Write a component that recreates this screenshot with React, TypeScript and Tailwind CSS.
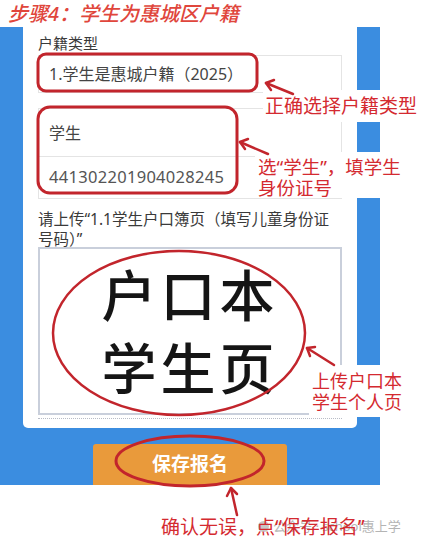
import React from "react";

const cjk = { fontFamily: '"Noto Sans", "Noto Sans CJK SC", sans-serif' };

function Note({ className, lines }: { className: string; lines: string[] }) {
  return (
    <div
      className={`absolute bg-white text-[#d42a30] leading-[21px] ${className}`}
      style={cjk}
    >
      {lines.map((l) => (
        <div key={l} className="whitespace-nowrap">
          {l}
        </div>
      ))}
    </div>
  );
}

function Marks() {
  const red = "#c2252c";
  return (
    <svg
      className="pointer-events-none absolute left-0 top-0"
      width="422"
      height="541"
      viewBox="0 0 422 541"
      fill="none"
    >
      {/* outlined fields */}
      <rect x="38" y="54" width="219" height="37" rx="8" stroke={red} strokeWidth="3" />
      <rect x="38" y="107" width="199" height="86" rx="12" stroke={red} strokeWidth="3" />
      <ellipse cx="179" cy="333" rx="126" ry="82" stroke={red} strokeWidth="2.5" />
      <ellipse cx="190" cy="461" rx="74" ry="25" stroke={red} strokeWidth="3" />
      {/* arrows */}
      <g stroke={red} strokeWidth="2.5" strokeLinecap="round" strokeLinejoin="round">
        <path d="M293 94 L266 83" />
        <path d="M274 80 L266 83 L271 90" />
        <path d="M268 154 L240 142" />
        <path d="M248 139 L240 142 L245 149" />
        <path d="M334 365 L307 348" />
        <path d="M315 347 L307 348 L310 356" />
        <path d="M237 515 L231 488" />
        <path d="M227 496 L231 488 L237 494" />
      </g>
    </svg>
  );
}

export default function App() {
  return (
    <div className="relative h-[541px] w-[422px] overflow-hidden bg-white" style={cjk}>
      <div className="h-[27px] pl-[8px] pt-[2px] text-[20px] font-medium italic leading-[24px] text-[#e0463c]">
        步骤4：学生为惠城区户籍
      </div>

      <div className="w-[380px] bg-[#3b8de0]">
        <div className="mx-[23px] h-[401px] rounded-b-[5px] bg-white px-[15px] pt-[6px] text-[#333]">
          <div className="text-[15px] leading-[21px] text-[#3a3a3a]">户籍类型</div>
          <div className="mt-[1px] flex h-[38px] w-[304px] items-center border border-[#e4e4e4] pl-[10px] text-[16px] text-[#444]">
            1.学生是惠城户籍（2025）
          </div>
          <div className="mt-[15px] w-[304px] border border-[#e4e4e4]">
            <div className="flex h-[48px] items-center border-b border-[#e4e4e4] pl-[10px] text-[16px] text-[#444]">
              学生
            </div>
            <div className="flex h-[41px] items-center pl-[10px] text-[16.5px] tracking-[0.3px] text-[#555]">
              441302201904028245
            </div>
          </div>
          <div className="mt-[10px] w-[304px] text-[15.5px] leading-[20px] text-[#3a3a3a]">
            请上传“1.1学生户口簿页（填写儿童身份证号码）”
          </div>
          <div className="mt-[-2px] flex h-[168px] w-[304px] flex-col items-center justify-center border-2 border-[#c9cfdb] bg-white">
            <div className="text-[55px] font-medium leading-[73px] tracking-[4px] text-[#151515]">户口本</div>
            <div className="text-[55px] font-medium leading-[73px] tracking-[4px] text-[#151515]">学生页</div>
          </div>
          <div className="mt-[3px] w-[304px] border-t border-dotted border-[#b8bcc6]" />
        </div>
        <div className="h-[57px] pl-[93px] pt-[16px]">
          <div className="flex h-[41px] w-[194px] items-center justify-center rounded-t-[3px] bg-[#e99a3b] text-[19px] font-bold text-white">
            保存报名
          </div>
        </div>
      </div>

      <div className="absolute left-[258px] top-[517px] flex items-center gap-[4px] text-[13px] text-[#b4b4b4]">
        <span className="inline-block h-[11px] w-[11px] rounded-full bg-[#c8c8c8]" />
        <span>公众号 · school惠上学</span>
      </div>

      <Note className="left-[263px] top-[90px] h-[32px] w-[159px] pl-[2px] pt-[6px] text-[19px]" lines={["正确选择户籍类型"]} />
      <Note className="left-[255px] top-[152px] w-[155px] pl-[3px] pt-[4px] text-[18.5px]" lines={["选“学生”，填学生", "身份证号"]} />
      <Note className="left-[309px] top-[365px] h-[52px] w-[100px] pl-[3px] pt-[6px] text-[18px]" lines={["上传户口本", "学生个人页"]} />
      <div className="absolute left-[161px] top-[515px] whitespace-nowrap text-[19px] leading-[24px] text-[#d42a30]">
        确认无误，点“保存报名”
      </div>

      <Marks />
    </div>
  );
}
